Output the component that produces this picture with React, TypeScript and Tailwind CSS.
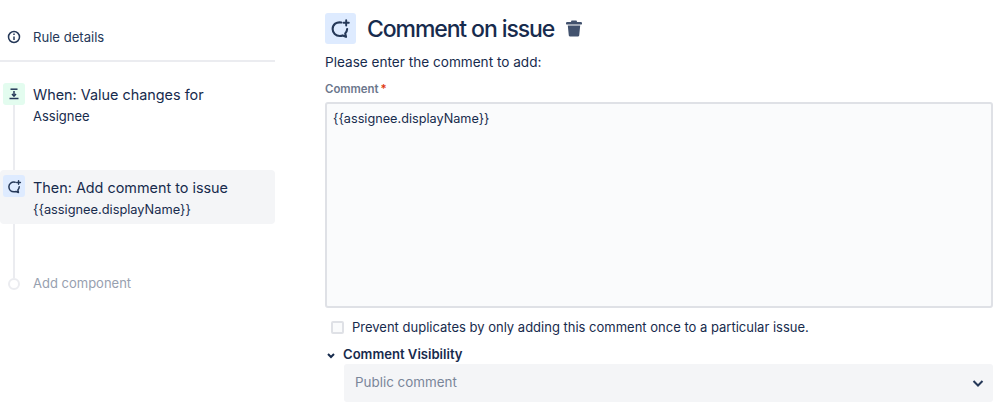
import React from 'react';

function CommentPlus({ size }: { size: number }) {
  return (
    <svg width={size} height={size} viewBox="0 0 24 24" fill="none" stroke="#253858" strokeWidth="2.400" strokeLinecap="round" strokeLinejoin="round">
      <path d="M13 5.200C7.500 4 3 7.500 3 12.500c0 4.600 3.600 8 8.200 8 1.200 0 2.300-.2 3.300-.6l3.800 1.600-.9-3.900C18.800 16 19.500 14.500 19.600 12.500" />
      <path d="M18.500 2.500v6M15.500 5.500h6" strokeWidth="2.200" />
    </svg>
  );
}

function Trash() {
  return (
    <svg width="16" height="17" viewBox="0 0 16 17" fill="#42526e">
      <path d="M5.500 .5h5l.6 1.500H14.800a.9.900 0 0 1 0 2.600H1.200a.9.900 0 0 1 0-2.600H4.900z" />
      <path d="M1.800 5.600h12.400l-1 9.900a1.300 1.300 0 0 1-1.300 1H4.100a1.300 1.300 0 0 1-1.300-1z" />
    </svg>
  );
}

export default function App() {
  return (
    <div className="w-[999px] h-[406px] overflow-hidden bg-white flex font-['Inter',sans-serif] text-[#172b4d]">
      {/* left rail */}
      <div className="w-[275px] shrink-0">
        <div className="h-[62px] pt-[27px] border-b-2 border-[#ebecf0] flex items-start">
          <div className="w-[28px] h-[20px] flex items-center justify-center">
            <svg width="14" height="14" viewBox="0 0 14 14" fill="none" stroke="#253858" strokeWidth="1.500">
              <circle cx="7" cy="7" r="5.500" />
              <path d="M7 6.500v3.500" />
              <path d="M7 3.500v1.500" />
            </svg>
          </div>
          <span className="ml-[5px] text-[13.100px] leading-[20px] text-[#253858]">Rule details</span>
        </div>

        <div className="relative pt-[21px]">
          <div className="absolute left-[13px] top-[40px] w-[2px] h-[176px] bg-[#ebecf0]" />

          <div className="relative flex h-[87px] pl-[3px]">
            <div className="w-[22px] h-[22px] rounded-[3px] bg-[#e3fcef] flex items-center justify-center">
              <svg width="14" height="14" viewBox="0 0 14 14" fill="none" stroke="#253858" strokeWidth="1.500">
                <path d="M3.500 2.200h7" />
                <path d="M7 4v5" />
                <path d="M5 7l2 2.200L9 7" />
                <path d="M2.500 11.500h9" />
              </svg>
            </div>
            <div className="ml-[8px]">
              <div className="text-[14.400px] leading-[24px]">When: Value changes for</div>
              <div className="text-[13px] leading-[18px]">Assignee</div>
            </div>
          </div>

          <div className="relative flex h-[54px] pl-[3px] pt-[5px] rounded-[4px] bg-[#f4f5f7]">
            <div className="w-[22px] h-[22px] rounded-[3px] bg-[#deebff] flex items-center justify-center">
              <CommentPlus size={15} />
            </div>
            <div className="ml-[8px]">
              <div className="text-[14.400px] leading-[24px] mt-[1px]">Then: Add comment to issue</div>
              <div className="text-[12.800px] leading-[18px] mt-[1px]">{'{{assignee.displayName}}'}</div>
            </div>
          </div>

          <div className="relative flex items-center h-[20px] mt-[50px]">
            <div className="ml-[8px] w-[12px] h-[12px] rounded-full border-2 border-[#ebecf0] bg-white" />
            <span className="ml-[13px] text-[13px] text-[#97a0af]">Add component</span>
          </div>
        </div>
      </div>

      {/* right panel */}
      <div className="ml-[50px] w-[668px] pt-[13px]">
        <div className="flex items-center h-[31px]">
          <div className="w-[31px] h-[31px] rounded-[3px] bg-[#deebff] flex items-center justify-center">
            <CommentPlus size={21} />
          </div>
          <h1 className="ml-[11px] mt-[2px] text-[23px] font-medium leading-[31px] tracking-[-1.100px]">Comment on issue</h1>
          <div className="ml-[12px] flex items-center"><Trash /></div>
        </div>

        <p className="mt-[8px] text-[13.600px] leading-[20px]">Please enter the comment to add:</p>

        <div className="mt-[9px] flex items-center text-[11.400px] font-semibold leading-[16px] text-[#6b778c]">
          Comment<span className="ml-[2px] text-[#de350b]">*</span>
        </div>

        <div className="mt-[5px] h-[206px] rounded-[3px] border-2 border-[#dfe1e6] bg-[#fafbfc] px-[6px] pt-[5px] text-[12.700px] leading-[20px]">
          {'{{assignee.displayName}}'}
        </div>

        <label className="mt-[9px] ml-[6px] flex items-center h-[20px]">
          <span className="w-[13px] h-[13px] rounded-[2px] border-2 border-[#dfe1e6] bg-[#fafbfc]" />
          <span className="ml-[8px] text-[13px] leading-[20px]">Prevent duplicates by only adding this comment once to a particular issue.</span>
        </label>

        <div className="mt-[8px] flex items-center h-[20px]">
          <svg width="14" height="14" viewBox="0 0 14 14" fill="none" stroke="#172b4d" strokeWidth="2" className="-ml-[1px]">
            <path d="M4 6l3 3 3-3" />
          </svg>
          <span className="ml-[5px] text-[13.100px] font-semibold">Comment Visibility</span>
        </div>

        <div className="mt-[-1px] ml-[19px] h-[38px] rounded-[3px] bg-[#f4f5f7] flex items-center justify-between pl-[11px] pr-[7px]">
          <span className="text-[13.400px] text-[#7a869a] -mt-[1px]">Public comment</span>
          <svg width="16" height="16" viewBox="0 0 16 16" fill="none" stroke="#253858" strokeWidth="2" className="-mt-[1px]">
            <path d="M3.500 6l4.500 4.500L12.500 6" />
          </svg>
        </div>
      </div>
    </div>
  );
}
